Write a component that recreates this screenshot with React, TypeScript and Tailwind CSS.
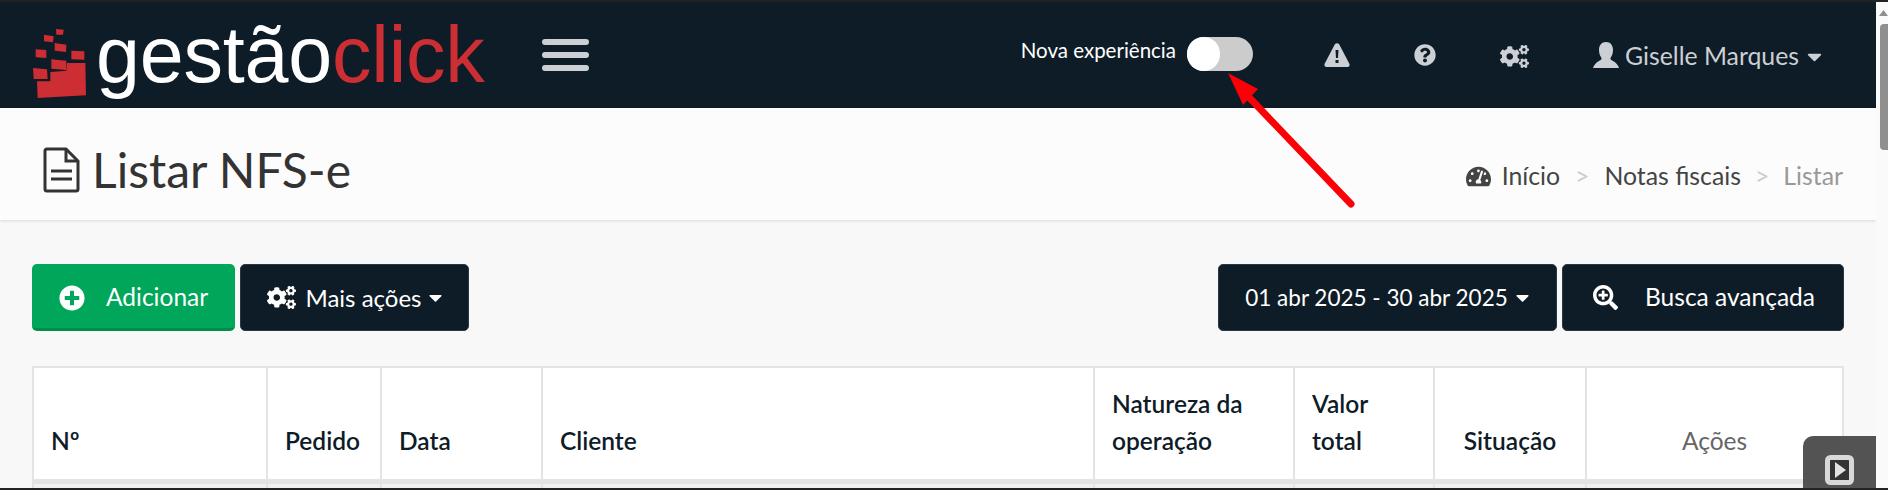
import {
  FaCaretDown,
  FaCogs,
  FaPlusCircle,
  FaQuestionCircle,
  FaSearchPlus,
  FaTachometerAlt,
} from "react-icons/fa";

function Logo() {
  return (
    <div className="flex items-end ml-[32px] h-[106px]">
      <svg width="62" height="74" viewBox="95 80 186 222" className="mb-[6px]" fill="#cc2e33">
        <polygon points="112,290 257,282 255,185 200,185 198,208 150,212 150,240 110,240" />
        <polygon points="98,200 140,204 142,233 100,233" />
        <polygon points="153,174 198,178 198,206 153,202" />
        <polygon points="213,148 252,150 252,175 213,174" />
        <polygon points="106,144 138,146 138,170 106,168" />
        <polygon points="163,125 198,130 197,152 163,148" />
        <polygon points="131,100 160,105 158,123 131,120" />
        <polygon points="167,83 190,85 188,100 168,100" />
      </svg>
      <div className="ml-[2px] mb-[9px] font-['Liberation_Sans',sans-serif] text-[79px] leading-[88px] tracking-[-0.2px] text-white">
        gestão<span className="text-[#cc2e33]">click</span>
      </div>
    </div>
  );
}

function WarningIcon() {
  return (
    <svg width="26" height="24" viewBox="0 0 26 24" className="ml-[71px]" fill="#ccd0d4">
      <path d="M11 1 Q13 -0.5 15 1 L25.5 21 Q26 23.5 24 24 H2 Q0 23.5 0.5 21 Z" />
      <path d="M11.5 7 H14.5 L14 15 H12 Z" fill="#0e1c27" />
      <rect x="11.5" y="17" width="3" height="3" fill="#0e1c27" />
    </svg>
  );
}

function UserIcon() {
  return (
    <svg width="26" height="26" viewBox="0 0 26 26" className="ml-[64px]" fill="#ccd0d4">
      <path d="M13 0 C17.5 0 20 3.5 20 8 C20 11 19 14 17.5 16 C17 17 18 18 20 19 C23 20.5 25 23 26 26 H0 C1 23 3 20.5 6 19 C8 18 9 17 8.5 16 C7 14 6 11 6 8 C6 3.5 8.5 0 13 0 Z" />
    </svg>
  );
}

function Topbar() {
  return (
    <header className="flex items-center h-[106px] bg-[#0e1c27]">
      <Logo />
      <div className="flex flex-col gap-[7px] ml-[57px]">
        <div className="w-[47px] h-[6px] rounded-full bg-[#ccd0d4]" />
        <div className="w-[47px] h-[6px] rounded-full bg-[#ccd0d4]" />
        <div className="w-[47px] h-[6px] rounded-full bg-[#ccd0d4]" />
      </div>
      <div className="flex items-center ml-auto mr-[50px] text-[#ccd0d4]">
        <span className="text-[20.5px] text-white -mt-[10px]">Nova experiência</span>
        <div className="ml-[11px] -mt-[2px] w-[66px] h-[34px] rounded-full bg-[#cccccc] flex">
          <div className="w-[33px] h-[34px] rounded-full bg-white" />
        </div>
        <WarningIcon />
        <FaQuestionCircle className="ml-[64px] text-[22px]" />
        <FaCogs className="ml-[64px] text-[29px] mt-[2px]" />
        <UserIcon />
        <span className="ml-[6px] text-[24.8px] mt-[2px]">Giselle Marques</span>
        <FaCaretDown className="ml-[4px] text-[23px] mt-[2px]" />
      </div>
    </header>
  );
}

function FileIcon() {
  return (
    <svg width="37" height="46" viewBox="0 0 37 46" fill="none" stroke="#333" strokeWidth="3">
      <path d="M2 4 Q2 2 4 2 H23 L35 14 V42 Q35 44 33 44 H4 Q2 44 2 42 Z" />
      <path d="M23 2 V14 H35" />
      <path d="M8 24 H29 M8 32 H29" />
    </svg>
  );
}

function PageTitle() {
  return (
    <section className="flex items-center h-[112px] pt-[12px] pl-[43px] pr-[33px] bg-[#fcfcfc] shadow-[0_1px_3px_rgba(0,0,0,0.12)] relative">
      <FileIcon />
      <h1 className="ml-[12px] text-[48px] text-[#333]">Listar NFS-e</h1>
      <nav className="flex items-center ml-auto mt-[12px] text-[24.8px] text-[#444]">
        <FaTachometerAlt className="text-[25px] mr-[11px]" />
        <span>Início</span>
        <span className="mx-[15px] text-[#ccc]">&gt;</span>
        <span>Notas fiscais</span>
        <span className="mx-[14px] text-[#ccc]">&gt;</span>
        <span className="text-[#999]">Listar</span>
      </nav>
    </section>
  );
}

function DarkButton({ children, w }: { children: React.ReactNode; w: string }) {
  return (
    <button className={`flex items-center justify-center h-[67px] rounded-[5px] border border-[#2b3844] bg-[#0e1c27] text-white ${w}`}>
      {children}
    </button>
  );
}

function Toolbar() {
  return (
    <div className="flex items-center gap-[5px] mt-[44px] px-[32px]">
      <button className="flex items-center w-[203px] h-[67px] pl-[27px] pt-[3px] rounded-[5px] bg-[#00a65a] border-b-[3px] border-[#008d4c] text-white text-[24.5px]">
        <FaPlusCircle className="text-[26px]" />
        <span className="ml-[21px]">Adicionar</span>
      </button>
      <DarkButton w="w-[229px] pl-[4px] text-[24px]">
        <FaCogs className="text-[29px] mr-[9px]" />
        Mais ações
        <FaCaretDown className="text-[21px] ml-[3px]" />
      </DarkButton>
      <div className="flex-1" />
      <DarkButton w="w-[339px] pl-[3px] text-[22.5px]">
        01 abr 2025 - 30 abr 2025
        <FaCaretDown className="text-[21px] ml-[4px]" />
      </DarkButton>
      <DarkButton w="w-[282px] pl-[2px] text-[24.5px]">
        <FaSearchPlus className="text-[25px]" />
        <span className="ml-[27px]">Busca avançada</span>
      </DarkButton>
    </div>
  );
}

function Th({ className, children }: { className: string; children: React.ReactNode }) {
  return (
    <th className={`border-[2px] border-[#e4e4e4] border-b-[5px] px-[17px] pb-[20px] align-bottom leading-[37px] ${className}`}>
      {children}
    </th>
  );
}

function BodyCell() {
  return <td className="border-x-[2px] border-[#e4e4e4]" />;
}

function NfseTable() {
  return (
    <div className="mt-[35px] mx-[32px]">
      <table className="w-full table-fixed border-collapse bg-white text-[24.5px] text-[#0e1c27]">
        <colgroup>
          <col className="w-[234px]" />
          <col className="w-[114px]" />
          <col className="w-[161px]" />
          <col className="w-[552px]" />
          <col className="w-[200px]" />
          <col className="w-[140px]" />
          <col className="w-[152px]" />
          <col />
        </colgroup>
        <thead>
          <tr className="h-[114px]">
            <Th className="text-left font-semibold">Nº</Th>
            <Th className="text-left font-semibold">Pedido</Th>
            <Th className="text-left font-semibold">Data</Th>
            <Th className="text-left font-semibold">Cliente</Th>
            <Th className="text-left font-semibold">Natureza da operação</Th>
            <Th className="text-left font-semibold">Valor total</Th>
            <Th className="text-center font-semibold">Situação</Th>
            <Th className="text-center font-normal text-[#666]">Ações</Th>
          </tr>
        </thead>
        <tbody>
          <tr className="h-[20px] bg-[#f2f2f2]">
            <BodyCell />
            <BodyCell />
            <BodyCell />
            <BodyCell />
            <BodyCell />
            <BodyCell />
            <BodyCell />
            <BodyCell />
          </tr>
        </tbody>
      </table>
    </div>
  );
}

function Scrollbar() {
  return (
    <aside className="flex flex-col items-end w-[12px] shrink-0 bg-[#fafafa]">
      <svg width="9" height="6" viewBox="0 0 9 6" className="mt-[8px]" fill="#8f8f8f">
        <polygon points="4.5,0 9,6 0,6" />
      </svg>
      <div className="mt-[8px] w-[8px] h-[126px] rounded-l-[4px] bg-[#8f8f8f]" />
    </aside>
  );
}

export default function App() {
  return (
    <div className="relative h-[490px] w-[1888px] overflow-hidden bg-[#f8f8f8] font-['Lato',sans-serif]">
      <div className="h-[2px] bg-[#222]" />
      <div className="flex h-[486px]">
        <div className="flex-1 min-w-0 overflow-hidden">
          <Topbar />
          <PageTitle />
          <Toolbar />
          <NfseTable />
        </div>
        <Scrollbar />
      </div>
      <div className="h-[2px] bg-[#222]" />

      {/* annotation arrow drawn over the page */}
      <svg className="absolute left-[1215px] top-[60px]" width="150" height="160" viewBox="1215 60 150 160" fill="none">
        <line x1="1351" y1="204" x2="1244" y2="92" stroke="#fb0007" strokeWidth="7" strokeLinecap="round" />
        <polygon points="1228,73 1258,89 1243,105" fill="#fb0007" />
      </svg>

      {/* floating video tab */}
      <div className="absolute left-[1803px] top-[436px] flex justify-center w-[73px] h-[52px] rounded-tl-[10px] bg-[#4a4a4a]/95 pt-[19px]">
        <svg width="29" height="30" viewBox="0 0 29 30">
          <rect x="2.5" y="2.5" width="24" height="25" rx="3" fill="#333" stroke="#d8d8d8" strokeWidth="5" />
          <polygon points="10,7 21,15 10,23" fill="#e2e2e2" />
        </svg>
      </div>
    </div>
  );
}
